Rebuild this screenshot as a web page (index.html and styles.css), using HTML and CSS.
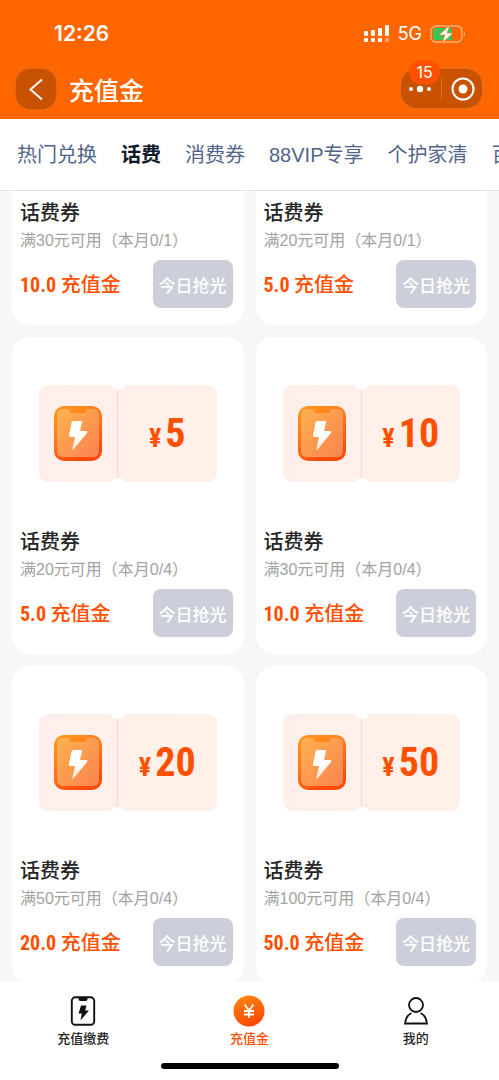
FILE: index.html
```
<!DOCTYPE html>
<html lang="zh-CN">
<head>
<meta charset="utf-8">
<meta name="viewport" content="width=device-width, initial-scale=1">
<title>充值金</title>
<link rel="stylesheet" href="styles.css">
</head>
<body>
<svg class="defs" aria-hidden="true">
  <defs>
    <linearGradient id="rim" x1="0" y1="0" x2="0.5" y2="1"><stop offset="0" stop-color="#ff9a1c"/><stop offset="0.5" stop-color="#fb7a20"/><stop offset="1" stop-color="#ff4a08"/></linearGradient>
    <linearGradient id="face" x1="0" y1="0" x2="1" y2="1"><stop offset="0" stop-color="#ffb24e"/><stop offset="1" stop-color="#fa8250"/></linearGradient>
    <linearGradient id="flash" x1="0" y1="0" x2="0" y2="1"><stop offset="0.5" stop-color="#fff"/><stop offset="1" stop-color="#ffe3d0"/></linearGradient>
    <linearGradient id="coin" x1="0" y1="0" x2="0.3" y2="1"><stop offset="0" stop-color="#ff8a10"/><stop offset="1" stop-color="#ff4a00"/></linearGradient>
    <symbol id="phone" viewBox="0 0 48 55">
      <rect width="48" height="55" rx="10" fill="url(#rim)"/>
      <path d="M9 3H15L16.500 6Q17 7 18 7H30Q31 7 31.500 6L33 3H39Q45 3 45 9V45Q45 51 39 51H9Q3 51 3 45V9Q3 3 9 3Z" fill="url(#face)"/>
      <path d="M19 15H27Q28.500 15 28 16.500L26 25H32Q34 25 33 27L19.500 43.500Q18 44.500 18.300 43L21 31H16Q14.500 31 15 29L17.500 16.500Q18 15 19 15Z" fill="url(#flash)"/>
    </symbol>
  </defs>
</svg>
<div class="app">
  <header class="header">
    <div class="status">
      <span class="clock">12:26</span>
      <div class="status-right">
        <svg width="26" height="18" viewBox="0 0 26 18" fill="#fff" aria-hidden="true">
          <rect x="0" y="6" width="4" height="5" rx="1"/><rect x="7" y="5" width="4" height="6" rx="1"/><rect x="14" y="3" width="4" height="8" rx="1"/><rect x="21" y="0" width="4" height="11" rx="1"/>
          <rect x="0" y="13" width="4" height="4" rx="1"/><rect x="7" y="13" width="4" height="4" rx="1"/><rect x="14" y="13" width="4" height="4" rx="1"/><rect x="21" y="13" width="4" height="4" rx="1" opacity=".4"/>
        </svg>
        <span class="network">5G</span>
        <svg width="36" height="18" viewBox="0 0 36 18" aria-hidden="true">
          <rect x="1" y="1" width="31" height="16" rx="5" fill="none" stroke="#ffb380" stroke-width="1.300"/>
          <path d="M34 6.500q2 2.500 0 5z" fill="#ffb380"/>
          <path d="M6 3H22V15H6Q3 15 3 12V6Q3 3 6 3Z" fill="#35c759"/>
          <path d="M20 0L9 10H15L12 18L23 8H17Z" fill="#fff" stroke="#ff6600" stroke-width=".6"/>
        </svg>
      </div>
    </div>
    <div class="nav">
      <button class="back" type="button" aria-label="返回">
        <svg width="40" height="40" viewBox="0 0 40 40" fill="none" stroke="#fff" stroke-width="2"><path d="M26 10.500L14.500 20.500L26 30.500"/></svg>
      </button>
      <h1 class="title">充值金</h1>
      <div class="capsule">
        <button class="capsule-btn" type="button" aria-label="更多">
          <svg width="24" height="8" viewBox="0 0 24 8" fill="#fff"><circle cx="3" cy="4" r="2"/><circle cx="12" cy="4" r="3.200"/><circle cx="21" cy="4" r="2"/></svg>
          <span class="badge">15</span>
        </button>
        <button class="capsule-btn" type="button" aria-label="关闭">
          <svg width="24" height="24" viewBox="0 0 24 24"><circle cx="12" cy="12" r="10.500" fill="none" stroke="#fff" stroke-width="2"/><circle cx="12" cy="12" r="4.500" fill="#fff"/></svg>
        </button>
      </div>
    </div>
  </header>

  <nav class="tabs">
    <a class="tab" href="#">热门兑换</a>
    <a class="tab active" href="#">话费</a>
    <a class="tab" href="#">消费券</a>
    <a class="tab" href="#">88VIP专享</a>
    <a class="tab" href="#">个护家清</a>
    <a class="tab" href="#">百</a>
  </nav>

  <main class="list">
    <article class="card card-cut">
      <h2 class="name">话费券</h2><p class="rule">满30元可用（本月0/1）</p>
      <div class="buy"><span class="price"><b>10.0</b> 充值金</span><button class="grab" type="button">今日抢光</button></div>
    </article>
    <article class="card card-cut">
      <h2 class="name">话费券</h2><p class="rule">满20元可用（本月0/1）</p>
      <div class="buy"><span class="price"><b>5.0</b> 充值金</span><button class="grab" type="button">今日抢光</button></div>
    </article>
    <article class="card">
      <div class="media"><div class="coupon"><div class="stub"><svg width="48" height="55"><use href="#phone"/></svg></div><div class="value"><span class="yen">¥</span>5</div></div></div>
      <h2 class="name">话费券</h2><p class="rule">满20元可用（本月0/4）</p>
      <div class="buy"><span class="price"><b>5.0</b> 充值金</span><button class="grab" type="button">今日抢光</button></div>
    </article>
    <article class="card">
      <div class="media"><div class="coupon"><div class="stub"><svg width="48" height="55"><use href="#phone"/></svg></div><div class="value"><span class="yen">¥</span>10</div></div></div>
      <h2 class="name">话费券</h2><p class="rule">满30元可用（本月0/4）</p>
      <div class="buy"><span class="price"><b>10.0</b> 充值金</span><button class="grab" type="button">今日抢光</button></div>
    </article>
    <article class="card">
      <div class="media"><div class="coupon"><div class="stub"><svg width="48" height="55"><use href="#phone"/></svg></div><div class="value"><span class="yen">¥</span>20</div></div></div>
      <h2 class="name">话费券</h2><p class="rule">满50元可用（本月0/4）</p>
      <div class="buy"><span class="price"><b>20.0</b> 充值金</span><button class="grab" type="button">今日抢光</button></div>
    </article>
    <article class="card">
      <div class="media"><div class="coupon"><div class="stub"><svg width="48" height="55"><use href="#phone"/></svg></div><div class="value"><span class="yen">¥</span>50</div></div></div>
      <h2 class="name">话费券</h2><p class="rule">满100元可用（本月0/4）</p>
      <div class="buy"><span class="price"><b>50.0</b> 充值金</span><button class="grab" type="button">今日抢光</button></div>
    </article>
  </main>

  <footer class="footer">
    <nav class="tabbar">
      <a class="item" href="#">
        <svg width="32" height="32" viewBox="0 0 32 32"><rect x="4.800" y="2.300" width="22.400" height="27.500" rx="3.500" fill="none" stroke="#111" stroke-width="1.900"/><path d="M11.500 2H20.500V4Q20.500 6 18.500 6H13.500Q11.500 6 11.500 4Z" fill="#111"/><path d="M14 10.500H19.500L18.200 15.500H22L13.500 25.500L14.800 18.500H11.500Z" fill="#111"/></svg>
        <span>充值缴费</span>
      </a>
      <a class="item current" href="#">
        <svg width="32" height="32" viewBox="0 0 32 32"><circle cx="16" cy="16" r="15.500" fill="url(#coin)"/><path d="M11.500 9.500L16 15.500L20.500 9.500M16 15.500V23M11 16H21M11 19.500H21" fill="none" stroke="#fff" stroke-width="1.900"/></svg>
        <span>充值金</span>
      </a>
      <a class="item" href="#">
        <svg width="32" height="32" viewBox="0 0 32 32" fill="none" stroke="#111" stroke-width="1.800"><circle cx="16" cy="10" r="7"/><path d="M11.500 18Q5.500 21 5 28.500H27Q26.500 21 20.500 18"/></svg>
        <span>我的</span>
      </a>
    </nav>
    <div class="home"></div>
  </footer>
</div>
</body>
</html>
```
FILE: styles.css
```
* { box-sizing: border-box; margin: 0; padding: 0; }
body { font-family: "Noto Sans CJK SC", sans-serif; background: #f7f7f7; color: #252525; }
button { border: 0; font: inherit; color: inherit; cursor: pointer; }
a { color: inherit; text-decoration: none; }
svg { display: block; }
.defs { position: absolute; width: 0; height: 0; }
.app { display: flex; flex-direction: column; height: 100vh; overflow: hidden; }

.header { background: #ff6600; color: #fff; flex: none; padding: 20px 16px 10px; }
.status { display: flex; justify-content: space-between; align-items: center; height: 28px; padding: 0 17px 0 38px; }
.clock { font: 600 21px/28px Inter, sans-serif; }
.status-right { display: flex; align-items: center; gap: 8px; }
.network { font: 400 18px/28px Inter, sans-serif; }
.nav { display: flex; align-items: center; margin-top: 20px; }
.back { width: 40px; height: 40px; border-radius: 14px; background: #c95200; box-shadow: 0 0 0 1px #df6818; }
.title { flex: 1; margin-left: 13px; font-size: 25px; line-height: 36px; font-weight: 500; }
.capsule { display: flex; width: 83px; height: 41px; border-radius: 17px; background: #c95200; border: 1px solid #df6f25; }
.capsule-btn { position: relative; flex: 1; display: flex; align-items: center; justify-content: center; background: none; }
.capsule-btn + .capsule-btn { padding-left: 4px; }
.capsule-btn + .capsule-btn::before { content: ""; position: absolute; left: 1px; top: 8px; bottom: 8px; width: 1px; background: #df6f25; }
.badge { position: absolute; top: -9px; left: 8px; width: 31px; height: 24px; border-radius: 12px; background: #ff5000; font: 400 16px/24px Inter, sans-serif; }

.tabs { display: flex; flex: none; gap: 24px; height: 72px; padding: 0 17px; align-items: center; overflow: hidden; background: #fff; border-bottom: 1px solid #e3e3e3; }
.tab { flex: none; font: 400 20px/28px "Liberation Sans", "Noto Sans CJK SC", sans-serif; color: #52658a; }
.tab.active { color: #101828; font-weight: 700; }

.list { flex: 1; min-height: 0; overflow: hidden; display: grid; grid-template-columns: 1fr 1fr; gap: 12px; align-content: start; padding: 0 12px; }
.card { background: #fff; border-radius: 18px; padding: 0 11px 17px 8px; }
.card-cut { border-radius: 0 0 18px 18px; padding-top: 7px; }
.media { height: 190px; padding: 48px 16px 0 19px; }
.coupon { position: relative; display: flex; height: 97px; border-radius: 9px; background: linear-gradient(90deg, #ffefec, #fff0e8); }
.coupon::before, .coupon::after { content: ""; position: absolute; left: 72px; width: 14px; height: 12px; border-radius: 50%; background: #fff; }
.coupon::before { top: -7px; }
.coupon::after { bottom: -8px; }
.stub { flex: none; width: 79px; display: flex; align-items: center; justify-content: center; border-right: 1px solid #f5d9d2; }
.value { flex: 1; display: flex; align-items: baseline; justify-content: center; gap: 4px; color: #ff5000; font: 700 40px/98px "Roboto Condensed", Roboto, sans-serif; }
.yen { font-size: 26px; }
.name { font-size: 20px; line-height: 28px; font-weight: 500; }
.rule { font: 400 16px/30px "Liberation Sans", "Noto Sans CJK SC", sans-serif; color: #a3a3a3; white-space: nowrap; }
.buy { display: flex; align-items: center; justify-content: space-between; margin-top: 4px; }
.price { font-size: 20px; line-height: 28px; font-weight: 500; color: #ff5000; white-space: nowrap; }
.price b { font-family: "Roboto Condensed", Roboto, sans-serif; font-size: 20px; font-weight: 700; }
.grab { flex: none; width: 80px; height: 48px; border-radius: 8px; background: #cccfda; color: #fff; font-size: 17px; font-weight: 500; white-space: nowrap; }

.footer { flex: none; height: 99px; background: #fff; display: flex; flex-direction: column; align-items: center; }
.tabbar { display: flex; width: 100%; padding-top: 14px; }
.item { flex: 1; display: flex; flex-direction: column; align-items: center; font-size: 13px; line-height: 20px; font-weight: 500; }
.item span { margin-top: 1px; }
.current { color: #ff5000; }
.home { width: 178px; height: 6px; margin-top: 15px; border-radius: 3px; background: #000; }
```
